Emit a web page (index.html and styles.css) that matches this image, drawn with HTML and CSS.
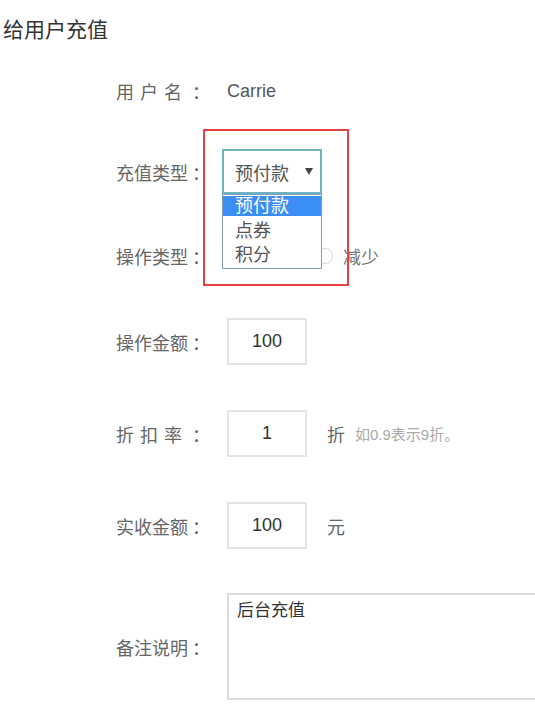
FILE: index.html
```html
<!DOCTYPE html>
<html lang="zh-CN">
<head>
  <meta charset="UTF-8" />
  <meta name="viewport" content="width=device-width, initial-scale=1.0"/>
  <title>给用户充值</title>
  <link rel="stylesheet" href="styles.css">
</head>
<body>

<h1 class="page-title">给用户充值</h1>

<form class="charge-form">
  <div class="row row-text">
    <label class="row-label"><span class="spaced">用户名</span><span class="colon">：</span></label>
    <span class="value">Carrie</span>
  </div>

  <div class="row row-select">
    <label class="row-label">充值类型<span class="colon">：</span></label>
    <div class="select-wrap">
      <div class="select">
        <span>预付款</span>
        <span class="arrow"></span>
      </div>
      <ul class="select-list">
        <li class="active">预付款</li>
        <li>点券</li>
        <li>积分</li>
      </ul>
    </div>
  </div>

  <div class="row row-radio">
    <label class="row-label">操作类型<span class="colon">：</span></label>
    <div class="radios">
      <span class="radio"><span class="dot"></span>增加</span>
      <span class="radio"><span class="dot"></span>减少</span>
    </div>
  </div>

  <div class="row">
    <label class="row-label">操作金额<span class="colon">：</span></label>
    <input class="box-input" type="text" value="100" />
  </div>

  <div class="row">
    <label class="row-label"><span class="spaced">折扣率</span><span class="colon">：</span></label>
    <input class="box-input" type="text" value="1" />
    <span class="unit">折</span>
    <span class="hint">如0.9表示9折。</span>
  </div>

  <div class="row">
    <label class="row-label">实收金额<span class="colon">：</span></label>
    <input class="box-input" type="text" value="100" />
    <span class="unit">元</span>
  </div>

  <div class="row row-area">
    <label class="row-label">备注说明<span class="colon">：</span></label>
    <textarea class="remark">后台充值</textarea>
  </div>
</form>

<div class="mark-box"></div>

</body>
</html>
```

FILE: styles.css
```css
html, body {
  overflow: hidden;
}
body {
  margin: 0;
  position: relative;
  font-family: 'Liberation Sans', 'Noto Sans CJK SC', sans-serif;
  background: #fff;
  color: #333;
}
.page-title {
  margin: 0;
  padding: 15px 0 0 3px;
  font-size: 21px;
  line-height: 29px;
  font-weight: normal;
  color: #333;
}
.charge-form {
  margin-top: 34px;
  display: flex;
  flex-direction: column;
  gap: 45px;
}
.row {
  display: flex;
  align-items: center;
  height: 47px;
}
.row-text { height: 26px; }
.row-select { height: 45px; }
.row-radio { height: 34px; }
.row-area { height: 106px; }
.row-label {
  width: 210px;
  margin-right: 17px;
  text-align: right;
  font-size: 18px;
  color: #666;
  flex-shrink: 0;
}
.spaced {
  letter-spacing: 6px;
}
.colon {
  margin-left: 4px;
}
.value {
  font-size: 18px;
  color: #555;
}

/* select, shown open */
.select-wrap {
  position: relative;
  margin-left: -5px;
}
.select {
  box-sizing: border-box;
  width: 100px;
  height: 45px;
  border: 2px solid #6db4c3;
  padding: 0 7px 0 11px;
  display: flex;
  justify-content: space-between;
  align-items: center;
  font-size: 18px;
  color: #555;
}
.arrow {
  width: 0;
  height: 0;
  border-left: 4px solid transparent;
  border-right: 4px solid transparent;
  border-top: 7px solid #444;
}
.select-list {
  position: absolute;
  top: 45px;
  left: 0;
  box-sizing: border-box;
  width: 100px;
  margin: 0;
  padding: 1px 0 0;
  list-style: none;
  background: #fff;
  border: 1px solid #7f9db9;
  z-index: 2;
}
.select-list li {
  height: 24px;
  line-height: 22px;
  padding-left: 12px;
  font-size: 18px;
  color: #555;
}
.select-list li.active {
  height: 20px;
  line-height: 20px;
  margin-bottom: 4px;
  background: #3a8ef6;
  color: #fff;
}

/* radios */
.radios {
  display: flex;
  gap: 28px;
}
.radio {
  display: flex;
  align-items: center;
  gap: 10px;
  font-size: 18px;
  color: #777;
}
.dot {
  box-sizing: border-box;
  width: 16px;
  height: 16px;
  border: 1px solid #d6d6d6;
  border-radius: 50%;
}

/* inputs */
.box-input {
  box-sizing: border-box;
  width: 80px;
  height: 47px;
  border: 2px solid #e0e6e8;
  outline: none;
  text-align: center;
  font-family: 'Liberation Sans', 'Noto Sans CJK SC', sans-serif;
  font-size: 18px;
  color: #333;
  padding: 0;
}
.unit {
  margin-left: 20px;
  font-size: 18px;
  color: #666;
}
.hint {
  margin-left: 10px;
  font-size: 15px;
  color: #aaa;
}
.remark {
  box-sizing: border-box;
  width: 330px;
  height: 107px;
  flex-shrink: 0;
  margin-top: -2px;
  border: 2px solid #dcdcdc;
  padding: 1px 8px;
  resize: none;
  outline: none;
  font-family: 'Liberation Sans', 'Noto Sans CJK SC', sans-serif;
  font-size: 17px;
  color: #333;
}

/* red annotation frame */
.mark-box {
  position: absolute;
  left: 203px;
  top: 129px;
  width: 146px;
  height: 157px;
  box-sizing: border-box;
  border: 2px solid #e8413f;
  z-index: 3;
}
```
